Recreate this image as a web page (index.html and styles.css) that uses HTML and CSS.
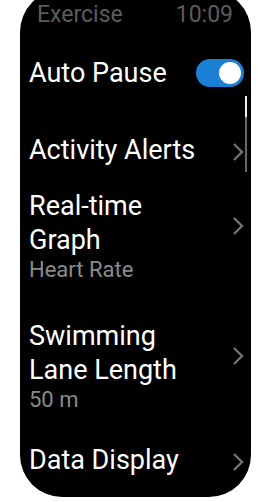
FILE: index.html
```html
<!doctype html>
<html>
  <head>
    <meta charset="utf-8">
    <meta name="viewport" content="width=device-width, initial-scale=1">
    <title>Exercise Settings</title>
    <link rel="stylesheet" href="styles.css">
  </head>
  <body>
    <div class="watch">
      <div class="status">
        <span>Exercise</span>
        <span>10:09</span>
      </div>

      <div class="scrollbar"><span></span></div>

      <ul class="menu">
        <li class="item first">
          <div class="text">
            <div class="title">Auto Pause</div>
          </div>
          <span class="switch"><span></span></span>
        </li>

        <li class="item">
          <div class="text">
            <div class="title">Activity Alerts</div>
          </div>
          <svg class="chevron" viewbox="0 0 12 20">
            <path d="M2 2 L10 10 L2 18"></path>
          </svg>
        </li>

        <li class="item tall">
          <div class="text">
            <div class="title">Real-time<br>Graph</div>
            <div class="sub">Heart Rate</div>
          </div>
          <svg class="chevron" viewbox="0 0 12 20">
            <path d="M2 2 L10 10 L2 18"></path>
          </svg>
        </li>

        <li class="item tall">
          <div class="text">
            <div class="title">Swimming<br>Lane Length</div>
            <div class="sub">50 m</div>
          </div>
          <svg class="chevron" viewbox="0 0 12 20">
            <path d="M2 2 L10 10 L2 18"></path>
          </svg>
        </li>

        <li class="item">
          <div class="text">
            <div class="title">Data Display</div>
          </div>
          <svg class="chevron" viewbox="0 0 12 20">
            <path d="M2 2 L10 10 L2 18"></path>
          </svg>
        </li>
      </ul>
    </div>
  </body>
</html>
```

FILE: styles.css
```css
html {
  box-sizing: border-box;
}

*, *:before, *:after {
  box-sizing: inherit;
}

body {
  background: #fff;
  font-family: Roboto, "Noto Sans", sans-serif;
  margin: 0;
  overflow: hidden;
}

.watch {
  background: #000;
  border-radius: 42px;
  height: 507px;
  margin: -10px 0 0 20px;
  overflow: hidden;
  padding-top: 12px;
  position: relative;
  width: 231px;
}

.status {
  color: #5c5c5c;
  display: flex;
  font-size: 23px;
  justify-content: space-between;
  line-height: 26px;
  padding: 0 18px 0 17px;
}

.scrollbar {
  background: #6a6a6a;
  height: 76px;
  position: absolute;
  right: 4px;
  top: 106px;
  width: 2px;
}

.scrollbar span {
  background: #f0f0f0;
  display: block;
  height: 21px;
}

.menu {
  list-style: none;
  margin: 17px 0 0;
  padding: 0;
}

.item {
  align-items: flex-start;
  display: flex;
  justify-content: space-between;
  padding: 11px 7px 11px 9px;
}

.item.first {
  margin-bottom: 21px;
}

.item.tall {
  padding-bottom: 25px;
}

.item.tall + .item.tall {
  padding-bottom: 19px;
}

.title {
  color: #fff;
  font-size: 27px;
  line-height: 34px;
}

.sub {
  color: #8a8a8a;
  font-size: 22px;
  line-height: 26px;
}

.switch {
  background: #1b7fd6;
  border-radius: 14px;
  display: flex;
  height: 28px;
  justify-content: flex-end;
  margin-top: 3px;
  padding: 3px;
  width: 48px;
}

.switch span {
  background: #fff;
  border-radius: 50%;
  height: 22px;
  width: 22px;
}

.chevron {
  fill: none;
  flex: none;
  height: 20px;
  margin-top: 9px;
  stroke: #727272;
  stroke-width: 2.4px;
  width: 12px;
}

.tall .chevron {
  margin-top: 27px;
}
```
